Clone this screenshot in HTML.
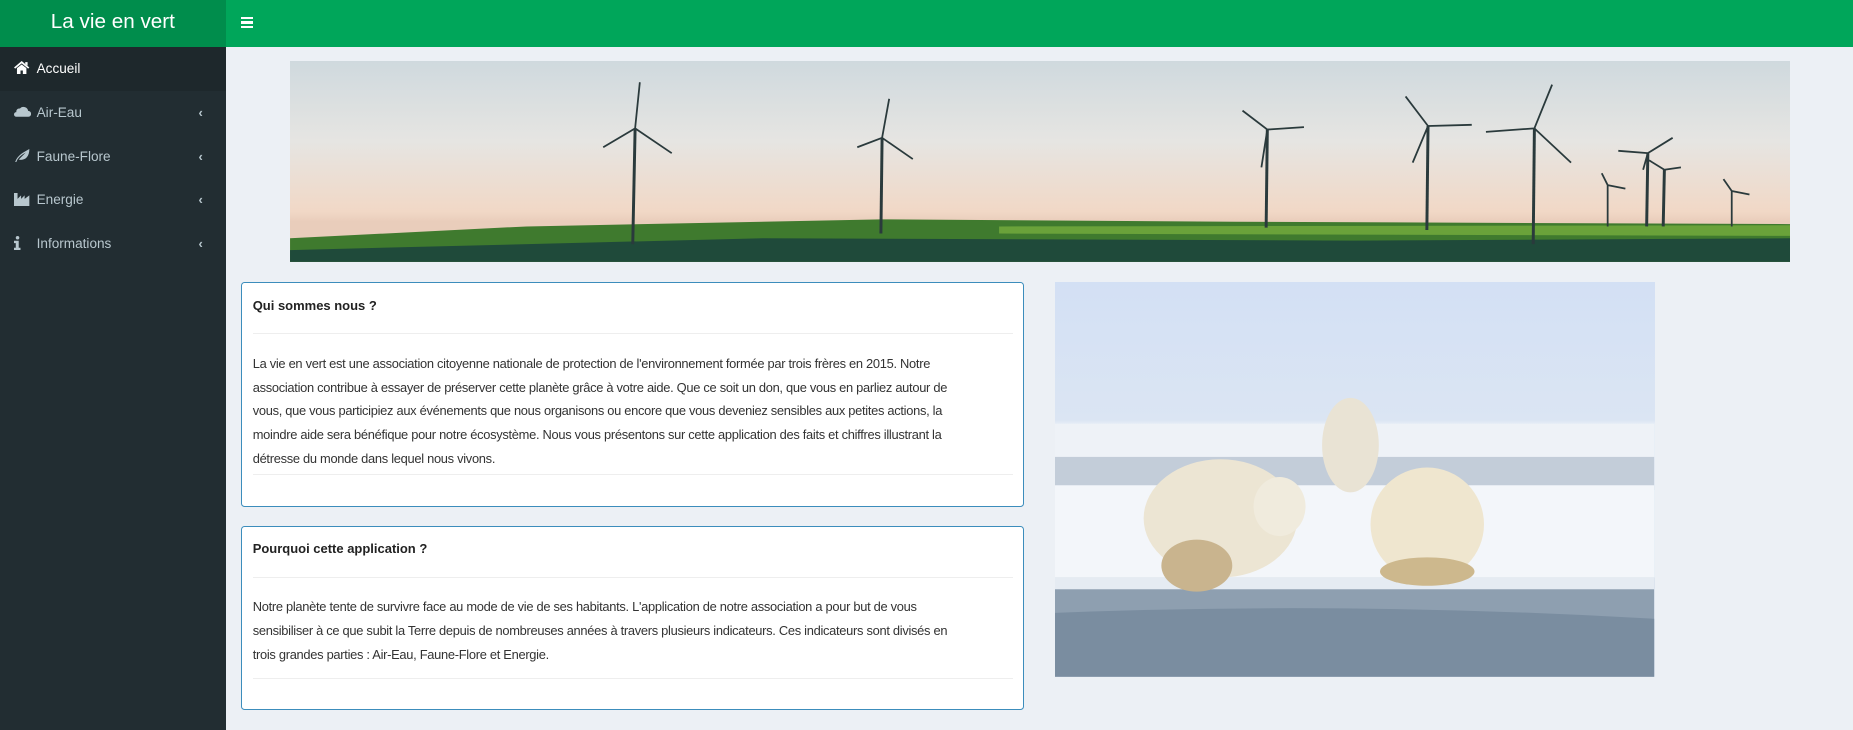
<!DOCTYPE html>
<html><head><meta charset="utf-8">
<style>
html{zoom:1.1818}
body{margin:0;width:1568px;height:618px;overflow:hidden;background:#ecf0f5;font-family:"Liberation Sans",sans-serif;position:relative}
.hdr{position:absolute;left:0;top:0;width:1568px;height:40px;background:#00a65a}
.logo{position:absolute;left:0;top:0;width:191px;height:40px;background:#008d4c;color:#fff;font-size:17.5px;text-align:center;line-height:38px}
.burger{position:absolute;left:204px;top:14px;width:10px}
.burger i{display:block;height:2px;background:#fff;margin-bottom:2px}
.side{position:absolute;left:0;top:40px;width:191px;height:578px;background:#222d32}
.item{height:37px;line-height:37px;color:#b8c7ce;font-size:11.5px;position:relative;padding-left:31px}
.item.act{background:#1e282c;color:#fff}
.item svg{position:absolute;left:12px;top:12px}
.item .ch{position:absolute;left:168px;top:0;font-size:11px;font-weight:bold;color:#b8c7ce}
.banner{position:absolute;left:245px;top:52px;width:1270px;height:170px;overflow:hidden;background:linear-gradient(#cfd9de 0%,#e6e5e2 40%,#f1d8c6 75%,#e9cdbb 80%)}
.box{position:absolute;left:204px;width:661px;background:#fff;border:1px solid #3c8dbc;border-radius:3px;font-size:10.9px;color:#333}
.box .t{position:absolute;left:9px;font-weight:bold;font-size:11px;color:#222}
.box .hr{position:absolute;left:9px;right:9px;height:1px;background:#eee}
.box .p{position:absolute;left:9px;line-height:20px;white-space:nowrap;letter-spacing:-0.25px}
.polar{position:absolute;left:893px;top:239px;width:507px;height:334px;overflow:hidden;background:linear-gradient(#d3e0f4 0%,#dbe5f3 35%,#e7eef6 36%)}
</style></head><body>
<div class="hdr"><div class="logo">La vie en vert</div><div class="burger"><i></i><i></i><i></i></div></div>
<div class="side">
 <div class="item act"><svg width="13" height="11" viewBox="0 0 13 11"><path d="M6.5 0L0 5.5 1 6.5 6.5 2 12 6.5 13 5.5z M2.5 6V11H5.5V8H7.5V11H10.5V6L6.5 3z M9.5 1h2v3l-2-1.6z" fill="#fff"/></svg>Accueil</div>
 <div class="item"><svg width="14" height="10" viewBox="0 0 14 10"><path d="M2 10a2 2 0 0 1 0-4 2.5 2.5 0 0 1 3-3 4 4 0 0 1 7 2 2.5 2.5 0 0 1 0 5z" fill="#b8c7ce"/></svg>Air-Eau<span class="ch">‹</span></div>
 <div class="item"><svg width="14" height="11" viewBox="0 0 14 11"><path d="M1 11C3 5 8 3 13 0 13 7 9 10 4 9 6 7 8 5 10 3 6 5 3 8 2 11z" fill="#b8c7ce"/></svg>Faune-Flore<span class="ch">‹</span></div>
 <div class="item"><svg width="14" height="11" viewBox="0 0 14 11"><path d="M0 0h3v5l3-3v3l3-3v3l4-3v9H0z" fill="#b8c7ce"/></svg>Energie<span class="ch">‹</span></div>
 <div class="item"><svg width="6" height="12" viewBox="0 0 6 12"><circle cx="3" cy="1.5" r="1.5" fill="#b8c7ce"/><path d="M0 4h4v6h1.5v2H0v-2h1.5V6H0z" fill="#b8c7ce"/></svg>Informations<span class="ch">‹</span></div>
</div>

<div class="banner">
<svg width="1270" height="170" viewBox="0 0 1270 170">
 <path d="M0 150 L200 140 L500 134 L800 136 L1270 138 L1270 170 L0 170z" fill="#3f7a2e"/>
 <path d="M0 160 L400 150 L900 152 L1270 150 L1270 170 L0 170z" fill="#1f4a3a"/>
 <path d="M600 140 L1270 139 L1270 148 L600 146z" fill="#6aa23a"/>
 <g stroke="#2a3a3c" fill="none">
  <g stroke-width="2.5"><line x1="290" y1="155" x2="292" y2="57"/><line x1="500" y1="146" x2="501" y2="65"/><line x1="826" y1="141" x2="827" y2="58"/><line x1="962" y1="143" x2="963" y2="55"/><line x1="1052" y1="155" x2="1053" y2="57"/><line x1="1148" y1="140" x2="1149" y2="78"/><line x1="1162" y1="140" x2="1163" y2="92"/></g>
  <g stroke-width="1.5">
   <path d="M292 57L296 18M292 57L323 78M292 57L265 73"/>
   <path d="M501 65L507 32M501 65L527 83M501 65L480 73"/>
   <path d="M827 58L806 42M827 58L858 56M827 58L822 90"/>
   <path d="M963 55L944 30M963 55L1000 54M963 55L950 86"/>
   <path d="M1053 57L1068 20M1053 57L1084 86M1053 57L1012 60"/>
   <path d="M1149 78L1170 65M1149 78L1124 76M1149 78L1145 92"/>
   <path d="M1163 92L1177 90M1163 92L1150 84"/>
   <path d="M1115 140V105M1115 105L1110 95M1115 105L1130 108M1220 140V110M1220 110L1213 100M1220 110L1235 113"/>
  </g>
 </g>
</svg>
</div>

<div class="box" style="top:239px;height:188px">
 <div class="t" style="top:12px">Qui sommes nous ?</div>
 <div class="hr" style="top:42px"></div>
 <div class="p" style="top:58px">La vie en vert est une association citoyenne nationale de protection de l'environnement formée par trois frères en 2015. Notre<br>association contribue à essayer de préserver cette planète grâce à votre aide. Que ce soit un don, que vous en parliez autour de<br>vous, que vous participiez aux événements que nous organisons ou encore que vous deveniez sensibles aux petites actions, la<br>moindre aide sera bénéfique pour notre écosystème. Nous vous présentons sur cette application des faits et chiffres illustrant la<br>détresse du monde dans lequel nous vivons.</div>
 <div class="hr" style="top:161px"></div>
</div>
<div class="box" style="top:445px;height:154px">
 <div class="t" style="top:12px">Pourquoi cette application ?</div>
 <div class="hr" style="top:42px"></div>
 <div class="p" style="top:58px">Notre planète tente de survivre face au mode de vie de ses habitants. L'application de notre association a pour but de vous<br>sensibiliser à ce que subit la Terre depuis de nombreuses années à travers plusieurs indicateurs. Ces indicateurs sont divisés en<br>trois grandes parties : Air-Eau, Faune-Flore et Energie.</div>
 <div class="hr" style="top:128px"></div>
</div>

<div class="polar">
<svg width="507" height="334" viewBox="0 0 507 334">
 <rect x="0" y="120" width="507" height="30" fill="#eef2f7"/>
 <rect x="0" y="148" width="507" height="28" fill="#c3cdd9"/>
 <rect x="0" y="172" width="507" height="80" fill="#f3f6fa"/>
 <rect x="0" y="250" width="507" height="84" fill="#8e9fb0"/>
 <rect x="0" y="250" width="507" height="10" fill="#e5ebf2"/>
 <path d="M0 280 Q250 270 507 285 L507 334 L0 334z" fill="#7a8da0"/>
 <ellipse cx="250" cy="138" rx="24" ry="40" fill="#e9e3d4"/>
 <ellipse cx="140" cy="200" rx="65" ry="50" fill="#ece5d3"/>
 <ellipse cx="190" cy="190" rx="22" ry="25" fill="#f0ebdd"/>
 <ellipse cx="120" cy="240" rx="30" ry="22" fill="#c9b48e"/>
 <ellipse cx="315" cy="205" rx="48" ry="48" fill="#efe6cf"/>
 <ellipse cx="315" cy="245" rx="40" ry="12" fill="#cdb88d"/>
</svg>
</div>
</body></html>
